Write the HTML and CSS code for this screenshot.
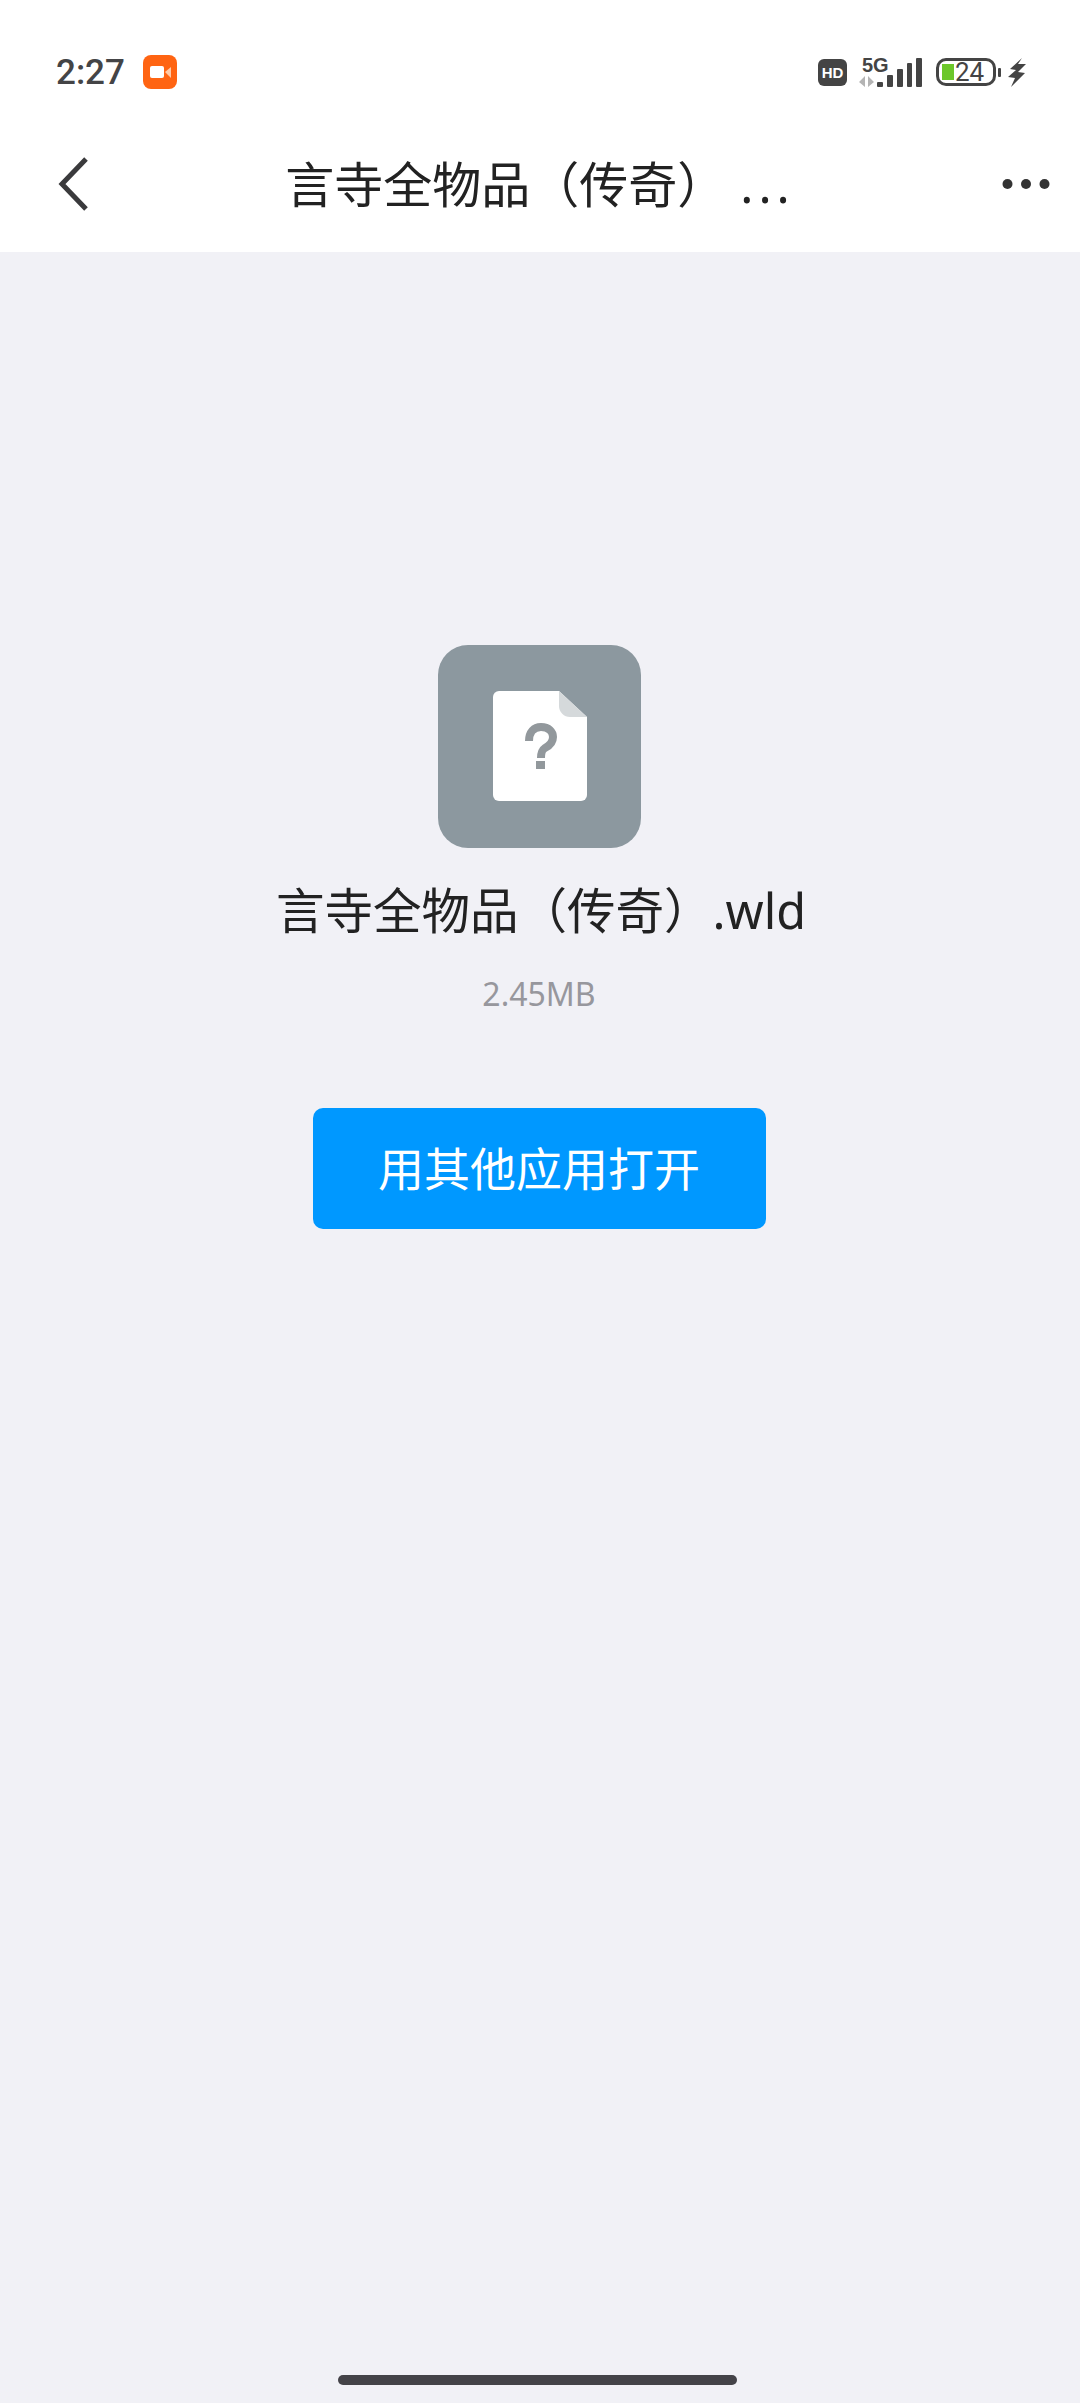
FILE: index.html
```html
<!DOCTYPE html>
<html lang="zh-CN">
<head>
    <meta charset="UTF-8">
    <meta name="viewport" content="width=device-width, initial-scale=1.0">
    <title>言寺全物品（传奇）.wld</title>
    <link rel="stylesheet" href="styles.css">
</head>
<body>
    <div class="page">
        <div class="status-bar">
            <div class="status-left">
                <span class="clock">2:27</span>
                <svg class="rec-icon" width="34" height="34" viewBox="0 0 34 34">
                    <rect width="34" height="34" rx="8" fill="#ff6412"/>
                    <rect x="7" y="11" width="14" height="12" rx="2" fill="#fff"/>
                    <path d="M22 17 L28 12 V23 Z" fill="#ffc9a6"/>
                </svg>
            </div>
            <div class="status-right">
                <span class="hd-badge">HD</span>
                <div class="network">
                    <span class="network-label">5G</span>
                    <svg width="63" height="31" viewBox="0 0 63 31">
                        <path d="M6 19 L0 25 L6 30 Z M9 19 L15 25 L9 30 Z" fill="#b4b4b4"/>
                        <rect x="18" y="25" width="6" height="5" rx="1" fill="#444"/>
                        <rect x="28" y="18" width="6" height="12" rx="1" fill="#444"/>
                        <rect x="38" y="12" width="6" height="18" rx="1" fill="#444"/>
                        <rect x="48" y="6" width="5" height="24" rx="1" fill="#444"/>
                        <rect x="57" y="1" width="6" height="29" rx="1" fill="#444"/>
                    </svg>
                </div>
                <div class="battery">
                    <div class="battery-body">
                        <span class="battery-fill"></span>
                        <span class="battery-text">24</span>
                    </div>
                    <span class="battery-tip"></span>
                </div>
                <svg class="bolt" width="18" height="29" viewBox="0 0 18 29">
                    <path d="M14 0 L2 11 L8 12 L0 19 L7 20 L3 29 L17 15 L10 14 L18 6 L10 6 Z" fill="#444"/>
                </svg>
            </div>
        </div>

        <div class="nav-bar">
            <svg class="back-icon" width="34" height="56" viewBox="0 0 34 56">
                <path d="M29 3 L5 28 L29 53" fill="none" stroke="#3a3a3c" stroke-width="5"/>
            </svg>
            <div class="nav-title">言寺全物品（传奇）<span class="nav-dots">...</span></div>
            <svg class="more-icon" width="48" height="12" viewBox="0 0 48 12">
                <circle cx="5.5" cy="6" r="5" fill="#333"/>
                <circle cx="24" cy="6" r="5" fill="#333"/>
                <circle cx="42.5" cy="6" r="5" fill="#333"/>
            </svg>
        </div>

        <div class="content">
            <svg class="file-icon" width="203" height="203" viewBox="0 0 203 203">
                <rect width="203" height="203" rx="30" fill="#8c989f"/>
                <path d="M61 46 H121 L149 72 V150 a6 6 0 0 1 -6 6 H61 a6 6 0 0 1 -6 -6 V52 a6 6 0 0 1 6 -6 Z" fill="#fff"/>
                <path d="M121 46 L149 72 H132 a11 11 0 0 1 -11 -11 Z" fill="#d5d9db"/>
                <path d="M91 96 C91 87 96 82 103 82 C111 82 115 87 115 92 C115 98 111 101 107 103 C104 105 103 107 103 113" fill="none" stroke="#92989c" stroke-width="8"/>
                <rect x="98" y="116" width="9" height="8" fill="#92989c"/>
            </svg>
            <div class="file-name">言寺全物品（传奇）.wld</div>
            <div class="file-size">2.45MB</div>
            <button class="open-btn" type="button">用其他应用打开</button>
        </div>

        <div class="home-bar"></div>
    </div>
</body>
</html>
```

FILE: styles.css
```css
* {
    box-sizing: border-box;
}
body {
    margin: 0;
    background-color: #f1f1f6;
    font-family: "Noto Sans", "Noto Sans CJK SC", sans-serif;
}
.page {
    display: flex;
    flex-direction: column;
    height: 2403px;
    overflow: hidden;
}

.status-bar {
    display: flex;
    justify-content: space-between;
    align-items: center;
    height: 112px;
    padding: 32px 54px 0 56px;
    background-color: #fff;
}
.status-left {
    display: flex;
    align-items: center;
    gap: 18px;
}
.clock {
    font-family: Roboto, sans-serif;
    font-size: 35px;
    font-weight: 500;
    color: #444446;
}
.status-right {
    display: flex;
    align-items: center;
}
.hd-badge {
    width: 29px;
    height: 27px;
    margin-right: 12px;
    border-radius: 6px;
    background-color: #444;
    color: #fff;
    font-family: "Liberation Sans", sans-serif;
    font-size: 15px;
    font-weight: bold;
    line-height: 27px;
    text-align: center;
}
.network {
    position: relative;
    width: 63px;
    height: 31px;
}
.network svg {
    display: block;
}
.network-label {
    position: absolute;
    top: -2px;
    left: 3px;
    font-family: "Liberation Sans", sans-serif;
    font-size: 20px;
    font-weight: bold;
    line-height: 20px;
    color: #444;
}
.battery {
    display: flex;
    align-items: center;
    gap: 2px;
    margin-left: 14px;
    margin-right: 7px;
}
.battery-body {
    display: flex;
    align-items: center;
    width: 60px;
    height: 28px;
    padding-left: 3px;
    border: 3px solid #444;
    border-radius: 10px;
}
.battery-fill {
    width: 12px;
    height: 16px;
    background-color: #6cc72a;
}
.battery-text {
    margin-left: 1px;
    font-family: Roboto, sans-serif;
    font-size: 26px;
    line-height: 22px;
    color: #444;
}
.battery-tip {
    width: 3px;
    height: 9px;
    border-radius: 1px;
    background-color: #444;
}

.nav-bar {
    display: grid;
    grid-template-columns: 1fr auto 1fr;
    align-items: center;
    height: 140px;
    padding: 4px 30px 0;
    background-color: #fff;
}
.back-icon {
    margin-left: 27px;
}
.nav-title {
    font-size: 49px;
    line-height: 66px;
    color: #222;
}
.nav-dots {
    margin-left: 14px;
    letter-spacing: 5px;
}
.more-icon {
    justify-self: end;
}

.content {
    display: flex;
    flex-direction: column;
    align-items: center;
    padding: 393px 2px 0 0;
}
.file-name {
    margin-top: 29px;
    margin-left: 4px;
    font-size: 48.5px;
    line-height: 66px;
    color: #222;
}
.file-size {
    margin-top: 28px;
    font-size: 32px;
    line-height: 46px;
    color: #97979d;
}
.open-btn {
    width: 453px;
    height: 121px;
    margin-top: 91px;
    padding: 0 0 5px;
    border: none;
    border-radius: 10px;
    background-color: #0098ff;
    color: #fff;
    font-family: "Noto Sans CJK SC", sans-serif;
    font-size: 46px;
}

.home-bar {
    width: 399px;
    height: 10px;
    margin: auto 0 18px 338px;
    border-radius: 5px;
    background-color: #444348;
}
```
